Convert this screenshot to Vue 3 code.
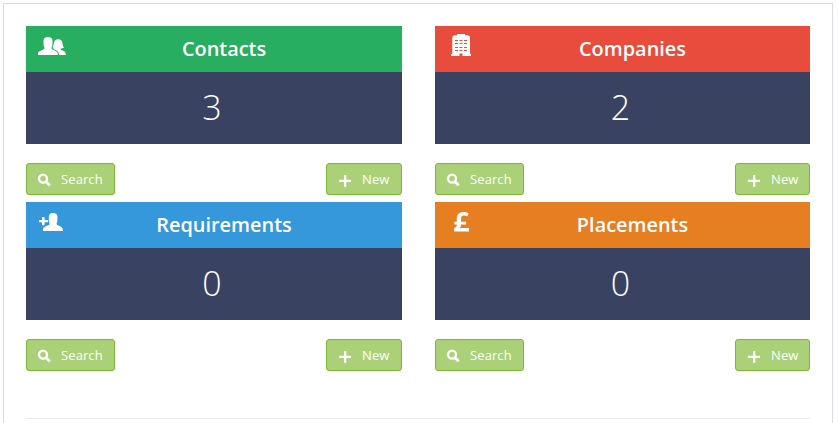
<script setup>
const cards = [
  { title: 'Contacts', count: 3, tone: 'green', icon: 'people' },
  { title: 'Companies', count: 2, tone: 'red', icon: 'building' },
  { title: 'Requirements', count: 0, tone: 'blue', icon: 'add-person' },
  { title: 'Placements', count: 0, tone: 'orange', icon: 'pound' },
]
</script>

<template>
  <main class="panel">
    <div class="grid">
      <section v-for="card in cards" :key="card.title" class="card">
        <header class="head" :class="card.tone">
          <svg class="icon" width="46" height="46" viewBox="0 0 46 46" fill="#fff" aria-hidden="true">
            <g v-if="card.icon === 'people'">
              <path d="M12 29v-1.600q0-1.400 1.400-2l4.300-2.100q1.300-.7.700-1.800-.9-1.400-.9-3.700V15q0-4 4.500-4t4.500 4v2.800q0 2.300-.9 3.700-.6 1.100.7 1.800l4 2.100q1.600.9 1.700 3.600z" />
              <path d="M27.400 21.900q-.5-.2-.8-.6 1.100-1.600 1.300-4.300.3-3.800 4.300-3.800t4.300 4q.1 2.900 1.500 4.300-1.300 1-3.400.9-.2 1 .7 1.500l2.900 1.300q1.600.9 1.800 3.800h-6.800q-.2-3-2.400-4.200l-2.700-1.300q-.9-.7-.7-1.600z" />
            </g>
            <path v-else-if="card.icon === 'building'" fill-rule="evenodd" d="M22 8h8v1.300h3q2 .4 2 2.500v15.700l1 1V30h-8.500v-2.500h-3V30H16v-1.500l1.300-1V11.800q0-2.100 2-2.500H22zM20 14v1h3v-1zm4.500 0v1h3v-1zm4.500 0v1h3v-1zM20 17v1h3v-1zm4.500 0v1h3v-1zm4.500 0v1h3v-1zM20 21v1h3v-1zm4.500 0v1h3v-1zm4.500 0v1h3v-1zM20 24v1h3v-1zm4.500 0v1h3v-1zm4.500 0v1h3v-1z" />
            <path v-else-if="card.icon === 'add-person'" d="M16 15h2.500v3h3.500v2.300h-3.500v3H16v-3h-3V18h3zM17 29v-1.800q0-1.600 1.400-2.200l4.400-1.900q1.300-.7.700-1.800-.7-1.400-.7-3.300V15q0-4 4.300-4t4.300 4v3q0 1.900-.7 3.300-.6 1.100.7 1.800l4 1.900q1.600.8 1.600 4z" />
            <path v-else d="M19.200 29.400V26q2.600-.7 2.600-3.100v-.3h-2.400v-2.900h2.400v-3.200q0-6.500 6.600-6.500 3 0 5.300 1.300l-1.400 3.300q-1.900-1-3.500-1-2.700 0-2.700 3v3.100h5v2.900h-5v.2q0 2.100-1.300 3.100h9.200v3.500z" />
          </svg>
          <h2>{{ card.title }}</h2>
        </header>
        <div class="count">{{ card.count }}</div>
        <div class="actions">
          <button type="button">
            <svg width="14" height="14" viewBox="0 0 14 14" fill="none" stroke="#fff" aria-hidden="true">
              <circle cx="6" cy="5.600" r="4" stroke-width="2.400" />
              <path d="m9.100 8.700 3.700 3.700" stroke-width="2.800" />
            </svg>
            <span>Search</span>
          </button>
          <button type="button" class="new">
            <svg width="14" height="14" viewBox="0 0 14 14" fill="#fff" aria-hidden="true">
              <path d="M6 2h2.300v4.800H13V9H8.300v4.800H6V9H1V6.800h5z" />
            </svg>
            <span>New</span>
          </button>
        </div>
      </section>
    </div>
    <hr />
  </main>
</template>

<style>
body {
  background: #fff;
  overflow: hidden;
}
</style>

<style scoped>
.panel {
  box-sizing: border-box;
  width: 830px;
  height: 420px;
  margin: 3px 0 0 3px;
  padding: 22px;
  border: 1px solid #dcdde1;
  border-right-color: #d5deeb;
  border-bottom: 0;
  font-family: "Open Sans", sans-serif;
  color: #fff;
}
.grid {
  display: grid;
  grid-template-columns: 376px 375px;
  column-gap: 33px;
  row-gap: 7px;
}
.head {
  display: flex;
  align-items: center;
  height: 46px;
}
.green { background: #27ae60; }
.red { background: #e74c3c; }
.blue { background: #3498db; }
.orange { background: #e67e22; }
.icon {
  flex: none;
}
h2 {
  flex: 1;
  margin: 0;
  padding-right: 26px;
  font-size: 19.900px;
  font-weight: 600;
  line-height: 46px;
  text-align: center;
}
.count {
  box-sizing: border-box;
  height: 72px;
  padding-right: 4px;
  background: #3a4262;
  font-size: 34px;
  font-weight: 300;
  line-height: 70px;
  text-align: center;
}
.actions {
  display: flex;
  justify-content: space-between;
  padding-top: 19px;
}
button {
  box-sizing: border-box;
  display: flex;
  align-items: center;
  gap: 10px;
  width: 89px;
  height: 32px;
  padding: 0 0 0 10px;
  border: 1px solid #7cb833;
  border-radius: 3px;
  background: #aad178;
  color: #fff;
  font: 400 13px/30px "Open Sans", sans-serif;
}
.new {
  width: 76px;
  padding-left: 11px;
}
.card:nth-child(even) .new {
  width: 75px;
}
button span {
  letter-spacing: 0.1px;
}
button svg {
  flex: none;
  position: relative;
  top: 1px;
}
hr {
  height: 1px;
  margin: 47px 0 0;
  border: 0;
  background: #eaeaec;
}
</style>
